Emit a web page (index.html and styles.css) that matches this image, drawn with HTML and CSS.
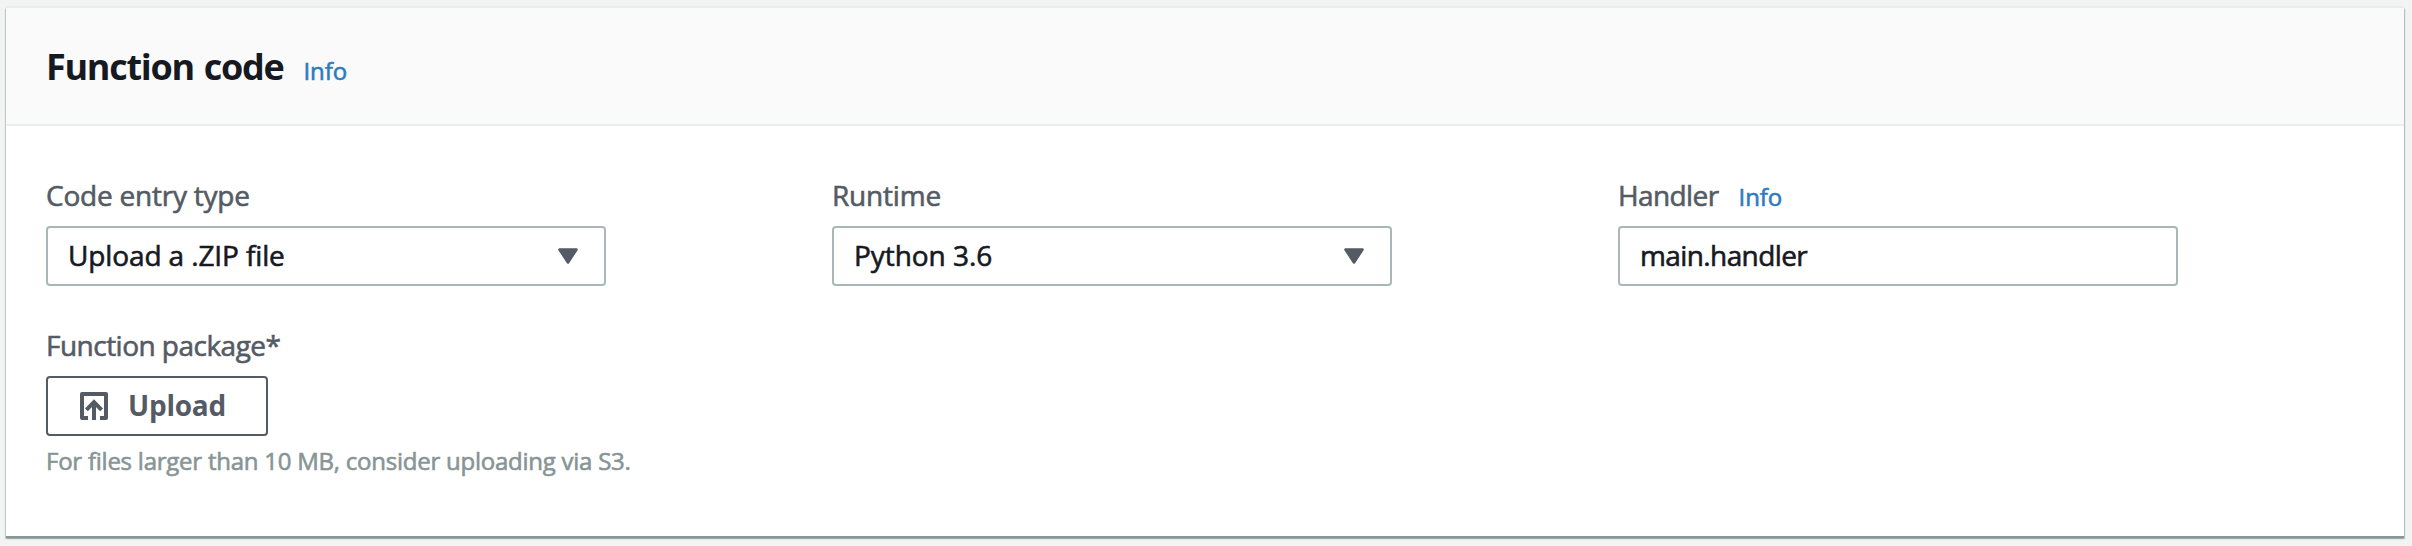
FILE: index.html
```html
<!DOCTYPE html>
<html lang="en">
<head>
<meta charset="utf-8">
<title>Function code</title>
<link rel="stylesheet" href="styles.css">
</head>
<body>
<section class="panel">
  <header class="panel-header">
    <h2 class="title">Function code</h2>
    <a class="info">Info</a>
  </header>
  <div class="panel-body">
    <div class="field">
      <div class="label-row"><span class="label t-entry">Code entry type</span></div>
      <div class="control"><span class="value t-zip">Upload a .ZIP file</span>
        <svg class="caret" width="20" height="16" viewBox="0 0 20 16"><path d="M1.5 1.5H18.5L10 14.5Z" fill="#545b64" stroke="#545b64" stroke-width="2.6" stroke-linejoin="round"/></svg>
      </div>
    </div>
    <div class="field">
      <div class="label-row"><span class="label t-runtime">Runtime</span></div>
      <div class="control"><span class="value t-python">Python 3.6</span>
        <svg class="caret" width="20" height="16" viewBox="0 0 20 16"><path d="M1.5 1.5H18.5L10 14.5Z" fill="#545b64" stroke="#545b64" stroke-width="2.6" stroke-linejoin="round"/></svg>
      </div>
    </div>
    <div class="field">
      <div class="label-row"><span class="label t-handler">Handler</span><a class="info">Info</a></div>
      <div class="control"><span class="value t-main">main.handler</span></div>
    </div>
    <div class="field package">
      <div class="label-row"><span class="label t-package">Function package*</span></div>
      <button class="upload" type="button">
        <svg width="28" height="28" viewBox="0 0 28 28" fill="none" stroke="#545b64" stroke-width="4"><path d="M8 26H2V2H26V26H20" stroke-linejoin="round"/><path d="M14 28V10M6.4 17.8L14 10L21.6 17.8"/></svg>
        <span>Upload</span>
      </button>
      <p class="hint">For files larger than 10 MB, consider uploading via S3.</p>
    </div>
  </div>
</section>
</body>
</html>
```

FILE: styles.css
```css
* { box-sizing: border-box; }
body {
  margin: 0;
  padding: 6px 8px 8px 6px;
  height: 546px;
  overflow: hidden;
  background: #f2f3f3;
  font-family: "Open Sans", "Noto Sans", sans-serif;
  font-size: 28px;
  color: #16191f;
}
.panel {
  height: 530px;
  background: #fff;
  border-top: 2px solid #eaeded;
  box-shadow: 0 2px 1px 0 #879596, 1px 3px 1px 0 rgba(0, 28, 36, .2), -1px 3px 1px 0 rgba(0, 28, 36, .15);
}
.panel-header {
  display: flex;
  align-items: baseline;
  gap: 20px;
  height: 118px;
  padding: 34px 40px 0;
  background: #fafafa;
  border-bottom: 2px solid #eaeded;
}
.title {
  margin: 0;
  font-size: 36px;
  line-height: 50px;
  font-weight: 700;
  letter-spacing: -1.3px;
  word-spacing: 2px;
}
.info {
  font-size: 24px;
  letter-spacing: -.1px;
  color: #2f7bbf;
}
.info, .label, .value, .hint { -webkit-text-stroke: .6px currentColor; }
.panel-body {
  display: grid;
  grid-template-columns: 560px 560px 560px;
  column-gap: 226px;
  padding: 49px 40px 0;
}
.label-row {
  display: flex;
  align-items: baseline;
  gap: 20px;
  height: 40px;
  line-height: 40px;
}
.label { color: #545b64; }
.t-entry { letter-spacing: -.22px; }
.t-runtime { letter-spacing: -.2px; }
.t-handler { letter-spacing: -.6px; }
.t-package { letter-spacing: -.52px; }
.t-zip { letter-spacing: -.12px; }
.t-python { letter-spacing: -.05px; }
.t-main { letter-spacing: -.6px; }
.control {
  display: flex;
  align-items: center;
  justify-content: space-between;
  height: 60px;
  margin-top: 11px;
  padding: 0 26px 0 20px;
  border: 2px solid #aab7b8;
  border-radius: 4px;
}
.value {
  line-height: 40px;
  padding-bottom: 2px;
}
.package { margin-top: 39px; }
.upload {
  display: flex;
  align-items: center;
  gap: 20px;
  width: 222px;
  height: 60px;
  margin-top: 11px;
  padding: 0 0 2px 32px;
  background: #fff;
  border: 2px solid #545b64;
  border-radius: 4px;
  color: #545b64;
  font: 700 28px/40px "Open Sans", "Noto Sans", sans-serif;
  letter-spacing: -.25px;
}
.upload svg { margin-top: 2px; }
.hint {
  margin: 8px 0 0;
  font-size: 24px;
  line-height: 34px;
  letter-spacing: -.24px;
  white-space: nowrap;
  color: #879596;
}
```
